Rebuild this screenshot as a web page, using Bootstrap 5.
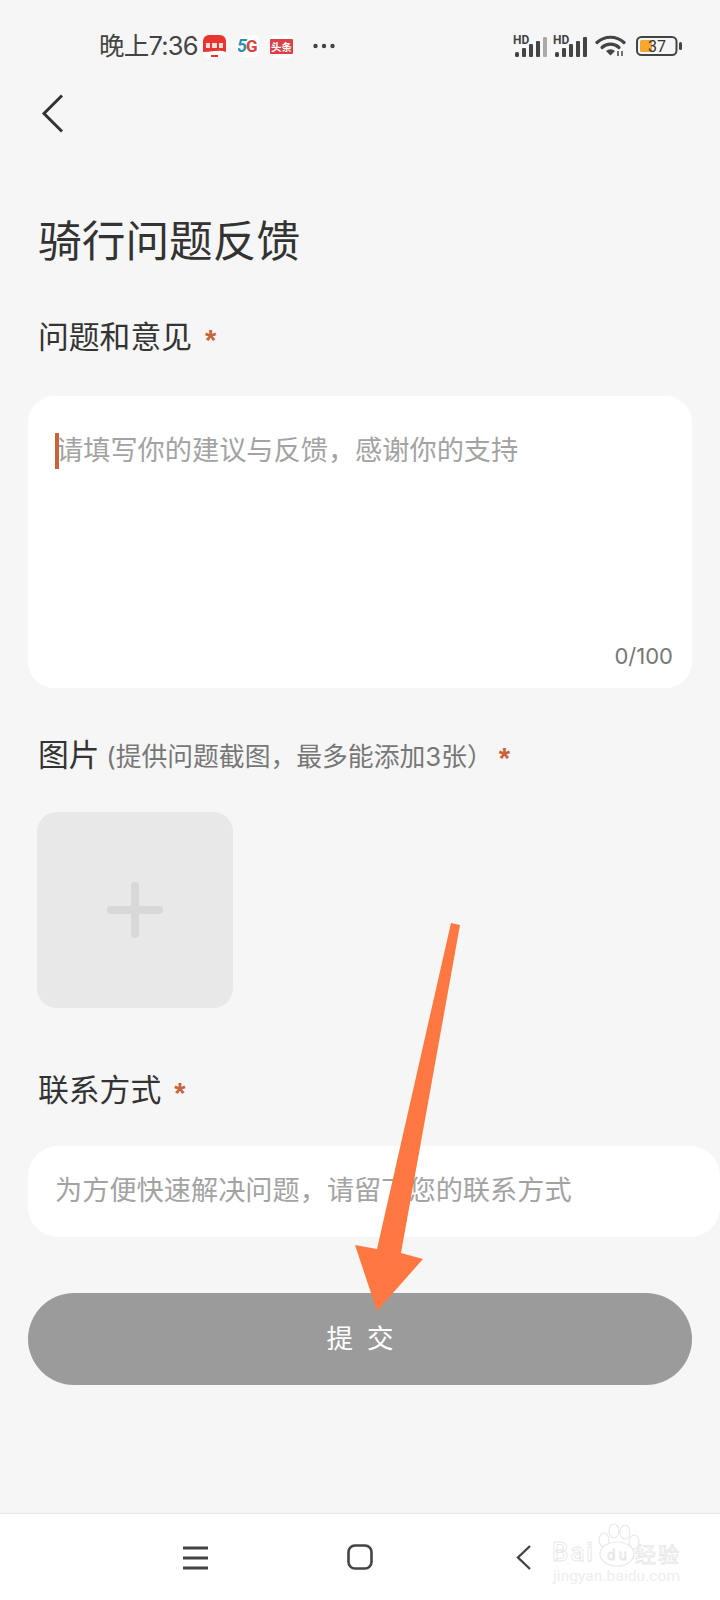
<!DOCTYPE html>
<html lang="zh">
<head>
  <meta charset="UTF-8" />
  <title>骑行问题反馈</title>
  <link href="https://cdn.jsdelivr.net/npm/bootstrap@5.3.0/dist/css/bootstrap.min.css" rel="stylesheet" />
  <style>
    html, body { height: 1600px; overflow: hidden; }
    body { background: #f6f6f6; font-family: "Inter", "Noto Sans CJK SC", sans-serif; color: #333; }
    .page-shell { position: relative; width: 720px; height: 1600px; overflow: hidden; }
    .status-row { height: 92px; padding-left: 99px; padding-right: 38px; color: #444; }
    .status-time { font-size: 25.500px; line-height: 1; width: 104px; white-space: nowrap; letter-spacing: -.8px; }
    .gap-app2 { margin-left: 12px; }
    .gap-app3 { margin-left: 11px; }
    .gap-dots { margin-left: 20px; }
    .gap-sig { margin-left: 6px; }
    .gap-wifi { margin-left: 8px; }
    .gap-batt { margin-left: 10px; }
    .back-row { height: 64px; padding-left: 40px; }
    .page-title { font-size: 43.700px; font-weight: 400; line-height: 60px; margin: 56px 0 0 38px; color: #333; }
    .field-label { font-size: 30.800px; line-height: 42px; height: 42px; margin: 0 0 0 38px; color: #333; white-space: nowrap; }
    .label-first { margin-top: 44px; }
    .label-second { margin-top: 46px; }
    .label-third { margin-top: 61px; }
    .field-hint { font-size: 25.800px; line-height: 1; color: #777; margin-left: -2px; }
    .req-star { color: #c8643c; font-size: 29px; font-weight: 700; margin-left: 13px; vertical-align: -2px; line-height: 0; font-family: "Liberation Sans", sans-serif; }
    .field-hint + .req-star { margin-left: 6px; }
    .sheet-box { background: #fff; border-radius: 26px; margin-left: 28px; width: 664px; }
    .text-sheet { height: 292px; padding: 37px 28px 0 28px; margin-top: 38px; position: relative; color: #a3a3a3; font-size: 27.200px; line-height: 36px; }
    .text-caret { position: absolute; left: 27px; top: 37px; width: 4px; height: 36px; background: #c8643c; }
    .text-count { position: absolute; right: 19px; bottom: 18px; color: #777; font-size: 22px; line-height: 28px; }
    .photo-slot { width: 196px; height: 196px; margin: 36px 0 0 37px; background: #e8e8e8; border-radius: 20px; }
    .contact-sheet { height: 91px; width: 692px; margin-top: 35px; padding-left: 27px; color: #a3a3a3; font-size: 27.200px; border-radius: 30px; }
    .submit-btn { display: block; width: 664px; height: 92px; margin: 56px 0 0 28px; padding: 0 0 0 14px; border: 0; border-radius: 46px; background: #9b9b9b; color: #fff; font-size: 26.500px; letter-spacing: 14px; }
    .nav-strip { position: absolute; left: 0; right: 0; top: 1513px; height: 87px; background: #fff; border-top: 1px solid #e8e8e8; }
    .nav-glyph { position: absolute; }
    .arrow-layer { position: absolute; left: 0; top: 0; pointer-events: none; }
  </style>
</head>
<body>
  <div class="page-shell">
    <div class="status-row d-flex align-items-center">
      <span class="status-time">晚上7:36</span>
      <svg width="23" height="23" viewBox="0 0 23 23"><rect width="23" height="23" rx="6" fill="#fff"/><path d="M0 6a6 6 0 0 1 6-6h11a6 6 0 0 1 6 6v11q-5-2-11.500-1T0 17z" fill="#e8352f"/><path d="M3 8h4v5H3zm6 0h5v5H9zm7 0h4v5h-4z" fill="#fbdcdc"/><rect x="8" y="20" width="7" height="2" fill="#e8352f"/></svg>
      <svg class="gap-app2" width="21" height="22" viewBox="0 0 21 22"><rect width="21" height="22" rx="6" fill="#fff"/><text x="-1" y="17" font-size="18" font-weight="700" font-style="italic" font-family="Roboto" fill="#2a8fb0">5</text><text x="8" y="17" font-size="17" font-weight="700" font-family="Roboto" fill="#d8433b">G</text></svg>
      <svg class="gap-app3" width="23" height="23" viewBox="0 0 23 23"><rect width="23" height="23" rx="6" fill="#fff"/><rect y="4" width="23" height="15" rx="1" fill="#dc3f46"/><text x="11.500" y="16" text-anchor="middle" font-size="10.500" font-weight="700" font-family="Noto Sans CJK SC" fill="#fff">头条</text></svg>
      <svg class="gap-dots" width="22" height="6" viewBox="0 0 22 6" fill="#444"><circle cx="2.500" cy="3" r="2.200"/><circle cx="11" cy="3" r="2.200"/><circle cx="19.500" cy="3" r="2.200"/></svg>
      <svg class="ms-auto" width="34" height="24" viewBox="0 0 34 24"><text x="0" y="9.500" font-size="12" font-weight="700" font-family="Roboto" fill="#444">HD</text><g fill="#444"><rect x="2" y="18" width="4" height="5" rx="1.500"/><rect x="9" y="14" width="4" height="9" rx="1"/><rect x="16" y="10" width="4" height="13" rx="1"/><rect x="23" y="7" width="4" height="16" rx="1"/></g><rect x="30" y="3" width="4" height="20" rx="1" fill="#aaa"/></svg>
      <svg class="gap-sig" width="34" height="24" viewBox="0 0 34 24"><text x="0" y="9.500" font-size="12" font-weight="700" font-family="Roboto" fill="#444">HD</text><g fill="#444"><rect x="2" y="18" width="4" height="5" rx="1.500"/><rect x="9" y="14" width="4" height="9" rx="1"/><rect x="16" y="10" width="4" height="13" rx="1"/><rect x="23" y="7" width="4" height="16" rx="1"/><rect x="30" y="3" width="4" height="20" rx="1"/></g></svg>
      <svg class="gap-wifi" width="31" height="22" viewBox="0 0 31 22"><g fill="none" stroke="#444" stroke-width="3.200" stroke-linecap="round"><path d="M2 7.500a20 20 0 0 1 27 0"/><path d="M7 12.500a12.500 12.500 0 0 1 17 0"/></g><path d="M11 16a7 7 0 0 1 9 0l-4.500 4.500z" fill="#444"/><path d="M23 21v-5M27 21v-5" stroke="#444" stroke-width="1.500"/></svg>
      <svg class="gap-batt" width="46" height="20" viewBox="0 0 46 20"><rect x="1" y="1" width="39.500" height="18" rx="4.500" fill="none" stroke="#444" stroke-width="2"/><rect x="4" y="4" width="12" height="12" rx="1.500" fill="#f5a72f"/><text x="12" y="16" font-size="16" font-family="Roboto" fill="#333">37</text><rect x="43" y="6" width="3" height="8" rx="1.500" fill="#444"/></svg>
    </div>
    <div class="back-row">
      <svg width="26" height="42" viewBox="0 0 26 42" fill="none" stroke="#333" stroke-width="3"><path d="M22 3.500 4 21.500 22 39.500"/></svg>
    </div>
    <h1 class="page-title">骑行问题反馈</h1>
    <p class="field-label label-first">问题和意见<span class="req-star">*</span></p>
    <div class="sheet-box text-sheet">
      <span class="text-caret"></span>请填写你的建议与反馈，感谢你的支持
      <span class="text-count">0/100</span>
    </div>
    <p class="field-label label-second">图片 <span class="field-hint">(提供问题截图，最多能添加3张）</span><span class="req-star">*</span></p>
    <div class="photo-slot d-flex align-items-center justify-content-center">
      <svg width="56" height="56" viewBox="0 0 56 56" fill="#d8d8d8"><rect y="24" width="56" height="8" rx="4"/><rect x="24" width="8" height="56" rx="4"/></svg>
    </div>
    <p class="field-label label-third">联系方式<span class="req-star">*</span></p>
    <div class="sheet-box contact-sheet d-flex align-items-center">为方便快速解决问题，请留下您的联系方式</div>
    <button class="submit-btn" type="button">提交</button>

    <svg class="arrow-layer" width="720" height="1600" viewBox="0 0 720 1600"><polygon fill="#ff7841" points="451,923 460,925 401,1253 423,1259 377,1311 355,1245 377,1249"/></svg>

    <div class="nav-strip">
      <svg class="nav-glyph" style="left:183px;top:32px" width="25" height="24" viewBox="0 0 25 24" stroke="#444" stroke-width="2.800"><path d="M0 2h25M0 12h25M0 22h25"/></svg>
      <svg class="nav-glyph" style="left:347px;top:30px" width="26" height="26" viewBox="0 0 26 26" fill="none" stroke="#444" stroke-width="2.600"><rect x="1.500" y="1.500" width="23" height="23" rx="6.500"/></svg>
      <svg class="nav-glyph" style="left:516px;top:31px" width="15" height="25" viewBox="0 0 15 25" fill="none" stroke="#444" stroke-width="2.400"><path d="M14 1 2 12.500 14 24"/></svg>
      <svg class="nav-glyph" style="left:550px;top:6px" width="134" height="76" viewBox="0 0 134 76">
        <g fill="#fff" stroke="#e8e8e8" stroke-width="1.200">
          <ellipse cx="54" cy="20" rx="5" ry="7"/><ellipse cx="64" cy="11" rx="5" ry="7"/><ellipse cx="75" cy="12" rx="5" ry="7"/><ellipse cx="84" cy="22" rx="5" ry="7"/>
          <ellipse cx="67" cy="34" rx="17" ry="12"/>
        </g>
        <g fill="#fff" stroke="#e6e6e6" stroke-width=".8" font-family="Roboto">
          <text x="2" y="41" font-size="26" font-weight="500" textLength="41">Bai</text>
          <text x="57" y="40" font-size="15" font-weight="400" textLength="20">du</text>
          <text x="85" y="42" font-size="21" font-family="Noto Sans CJK SC" textLength="44">经验</text>
        </g>
        <text x="3" y="61" font-size="15.500" font-family="Roboto" fill="#eeeeee" textLength="127">jingyan.baidu.com</text>
      </svg>
    </div>
  </div>
</body>
</html>
